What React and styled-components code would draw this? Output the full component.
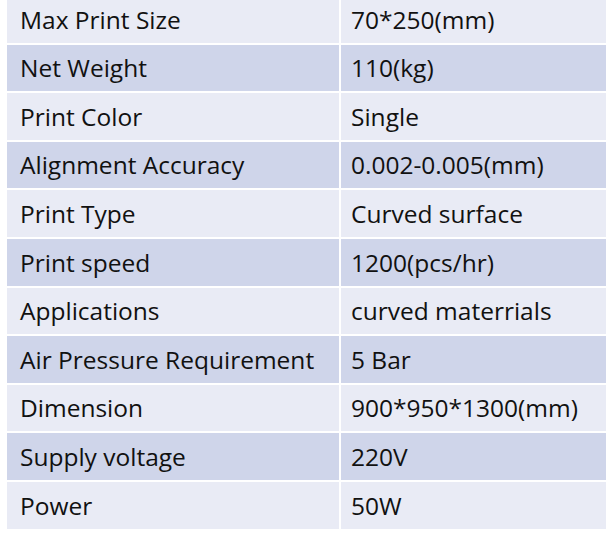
import React from 'react';
import styled, { createGlobalStyle } from 'styled-components';

const GlobalStyle = createGlobalStyle`
    body {
        margin: 0;
        background: #ffffff;
    }
`

const Page = styled.div`
    width: 615px;
    height: 540px;
    overflow: hidden;
    background: #ffffff;
    padding-left: 7px;
    box-sizing: border-box;
`

const Table = styled.table`
    width: 599px;
    margin-top: -4px;
    border-collapse: collapse;
    font-family: "Open Sans", "Noto Sans", sans-serif;
    font-size: 24.5px;
    line-height: 1.2;
    color: #111111;
`

const Row = styled.tr`
    background: ${props => (props.$dark ? '#cfd5ea' : '#e9ebf5')};
`

const Cell = styled.td`
    height: 46.6px;
    padding: 0 0 0 ${props => (props.$label ? '13px' : '10px')};
    border: 2px solid #ffffff;
    border-top: ${props => (props.$first ? 'none' : '2px solid #ffffff')};
    border-left: none;
    border-right: ${props => (props.$label ? '2px solid #ffffff' : 'none')};
    width: ${props => (props.$label ? '319px' : 'auto')};
    white-space: nowrap;
    vertical-align: middle;
`

const specs = [
    ['Max Print Size', '70*250(mm)'],
    ['Net Weight', '110(kg)'],
    ['Print Color', 'Single'],
    ['Alignment Accuracy', '0.002-0.005(mm)'],
    ['Print Type', 'Curved surface'],
    ['Print speed', '1200(pcs/hr)'],
    ['Applications', 'curved materrials'],
    ['Air Pressure Requirement', '5 Bar'],
    ['Dimension', '900*950*1300(mm)'],
    ['Supply voltage', '220V'],
    ['Power', '50W'],
];

function App() {
    return (
        <Page>
            <GlobalStyle />
            <Table>
                <tbody>
                    {specs.map(([label, value], i) => (
                        <Row key={label} $dark={i % 2 === 1}>
                            <Cell $label $first={i === 0}>{label}</Cell>
                            <Cell $first={i === 0}>{value}</Cell>
                        </Row>
                    ))}
                </tbody>
            </Table>
        </Page>
    );
}

export default App;
